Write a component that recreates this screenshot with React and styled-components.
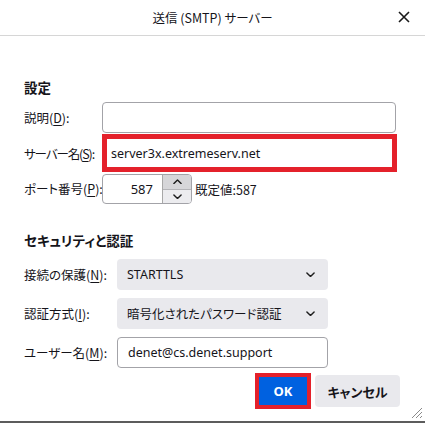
import React from "react";
import styled, { createGlobalStyle } from "styled-components";

const Global = createGlobalStyle`
  html, body { margin: 0; padding: 0; background: #fff; }
  body {
    font-family: "Noto Sans", "Noto Sans CJK JP", sans-serif;
    font-feature-settings: "palt";
    color: #15141a;
  }
  * { box-sizing: border-box; }
`;

const Window = styled.div`
  position: relative;
  width: 425px;
  height: 423px;
  display: flex;
  flex-direction: column;
  background: #fff;
  border-bottom: 2px solid #5c5c5c;
  overflow: hidden;
`;

const TitleBar = styled.div`
  height: 36px;
  flex: none;
  display: grid;
  grid-template-columns: 1fr auto 1fr;
  align-items: center;
  border-bottom: 1px solid #d6d6d6;
`;

const Title = styled.div`
  grid-column: 2;
  font-size: 12.5px;
  font-family: "Noto Sans CJK JP", sans-serif;
`;

const CloseBox = styled.div`
  grid-column: 3;
  justify-self: end;
  margin-right: 15px;
  display: flex;
  align-items: center;
  margin-top: -1px;
`;

const Content = styled.div`
  padding: 0 24px;
  display: flex;
  flex-direction: column;
`;

const Heading = styled.div`
  font-family: "Noto Sans CJK JP", sans-serif;
  font-weight: 700;
  font-size: 13.5px;
  line-height: 20px;
  margin-top: ${(p) => p.$top}px;
`;

const FormGrid = styled.div`
  display: grid;
  grid-template-columns: ${(p) => p.$label}px auto;
  align-items: center;
  margin-top: ${(p) => p.$top}px;
  row-gap: ${(p) => p.$gap}px;
`;

const Label = styled.label`
  font-family: "Noto Sans CJK JP", sans-serif;
  font-size: 12.5px;
  white-space: nowrap;
  letter-spacing: ${(p) => (p.$tight ? "-1.1px" : "0")};
  u { text-underline-offset: 2px; }
`;

const TextInput = styled.div`
  width: ${(p) => p.$w}px;
  height: ${(p) => p.$h || 31}px;
  border: ${(p) => (p.$red ? "5px solid #e4212b" : "1px solid #a3a3a8")};
  border-radius: ${(p) => (p.$red ? 0 : 4)}px;
  display: flex;
  align-items: center;
  padding-left: ${(p) => (p.$red ? 4 : 10)}px;
  font-size: 12.5px;
  background: #fff;
`;

const PortRow = styled.div`
  display: flex;
  align-items: center;
  gap: 3px;
  margin-top: 1px;
`;

const PortInput = styled.div`
  width: 90px;
  height: 30px;
  border: 1px solid #a3a3a8;
  border-radius: 4px;
  display: flex;
  align-items: stretch;
  overflow: hidden;
`;

const PortValue = styled.div`
  flex: 1;
  display: flex;
  align-items: center;
  justify-content: flex-end;
  padding-right: 9px;
  font-size: 13px;
`;

const Spinner = styled.div`
  width: 29px;
  display: flex;
  flex-direction: column;
  border-left: 1px solid #a8a8a8;
`;

const SpinBtn = styled.div`
  flex: 1;
  display: flex;
  align-items: center;
  justify-content: center;
  background: ${(p) => (p.$up ? "#d6d6d9" : "#ececef")};
  border-bottom: ${(p) => (p.$up ? "1px solid #b4b4b8" : "none")};
`;

const DefaultText = styled.span`
  font-family: "Noto Sans CJK JP", sans-serif;
  font-size: 12.5px;
`;

const Select = styled.div`
  width: 211px;
  height: 31px;
  border-radius: 4px;
  background: #e9e9ed;
  display: flex;
  align-items: center;
  justify-content: space-between;
  padding: 0 13px 0 10px;
  font-size: 12.5px;
  font-family: "Noto Sans", "Noto Sans CJK JP", sans-serif;
`;

const Buttons = styled.div`
  display: flex;
  justify-content: flex-end;
  align-items: center;
  gap: 4px;
  margin-top: 5px;
  margin-right: 1px;
`;

const Highlight = styled.div`
  border: 4px solid #e4212b;
  display: flex;
`;

const PrimaryButton = styled.button`
  width: 48px;
  height: 28px;
  border: none;
  background: #0061e0;
  color: #fff;
  font-weight: 700;
  font-size: 13px;
  font-family: "Noto Sans", sans-serif;
  padding: 0;
`;

const SecondaryButton = styled.button`
  width: 85px;
  height: 32px;
  border: none;
  border-radius: 4px;
  background: #e9e9ed;
  color: #15141a;
  font-weight: 700;
  font-size: 13px;
  font-family: "Noto Sans CJK JP", sans-serif;
  font-feature-settings: "palt";
  padding: 0;
`;

const Grip = styled.svg`
  position: absolute;
  right: 2px;
  bottom: 2px;
`;

const Chevron = ({ up, size = 9 }) => (
  <svg width={size} height={size * 0.6} viewBox="0 0 10 6">
    <path
      d={up ? "M1 5 L5 1 L9 5" : "M1 1 L5 5 L9 1"}
      fill="none"
      stroke="#1f1f1f"
      strokeWidth="1.6"
      strokeLinecap="round"
      strokeLinejoin="round"
    />
  </svg>
);

export default function App() {
  return (
    <>
      <Global />
      <Window>
        <TitleBar>
          <Title>送信 (SMTP) サーバー</Title>
          <CloseBox>
            <svg width="12" height="12" viewBox="0 0 12 12">
              <path d="M1 1 L11 11 M11 1 L1 11" stroke="#1a1a1a" strokeWidth="1.6" />
            </svg>
          </CloseBox>
        </TitleBar>
        <Content>
          <Heading $top={41}>設定</Heading>
          <FormGrid $label={78} $top={5} $gap={1}>
            <Label>説明(<u>D</u>):</Label>
            <TextInput $w={294} />
            <Label $tight>サーバー名(<u>S</u>):</Label>
            <TextInput $w={295} $h={38} $red>
              server3x.extremeserv.net
            </TextInput>
            <Label>ポート番号(<u>P</u>):</Label>
            <PortRow>
              <PortInput>
                <PortValue>587</PortValue>
                <Spinner>
                  <SpinBtn $up>
                    <Chevron up />
                  </SpinBtn>
                  <SpinBtn>
                    <Chevron />
                  </SpinBtn>
                </Spinner>
              </PortInput>
              <DefaultText>既定値:587</DefaultText>
            </PortRow>
          </FormGrid>
          <Heading $top={26}>セキュリティと認証</Heading>
          <FormGrid $label={93} $top={9} $gap={8}>
            <Label>接続の保護(<u>N</u>):</Label>
            <Select>
              <span>STARTTLS</span>
              <Chevron />
            </Select>
            <Label>認証方式(<u>I</u>):</Label>
            <Select>
              <span>暗号化されたパスワード認証</span>
              <Chevron />
            </Select>
            <Label>ユーザー名(<u>M</u>):</Label>
            <TextInput $w={211}>denet@cs.denet.support</TextInput>
          </FormGrid>
          <Buttons>
            <Highlight>
              <PrimaryButton>OK</PrimaryButton>
            </Highlight>
            <SecondaryButton>キャンセル</SecondaryButton>
          </Buttons>
        </Content>
        <Grip width="13" height="13" viewBox="0 0 13 13">
          <path d="M12 2 L2 12 M12 6 L6 12 M12 10 L10 12" stroke="#8a8a8a" strokeWidth="1" />
        </Grip>
      </Window>
    </>
  );
}
